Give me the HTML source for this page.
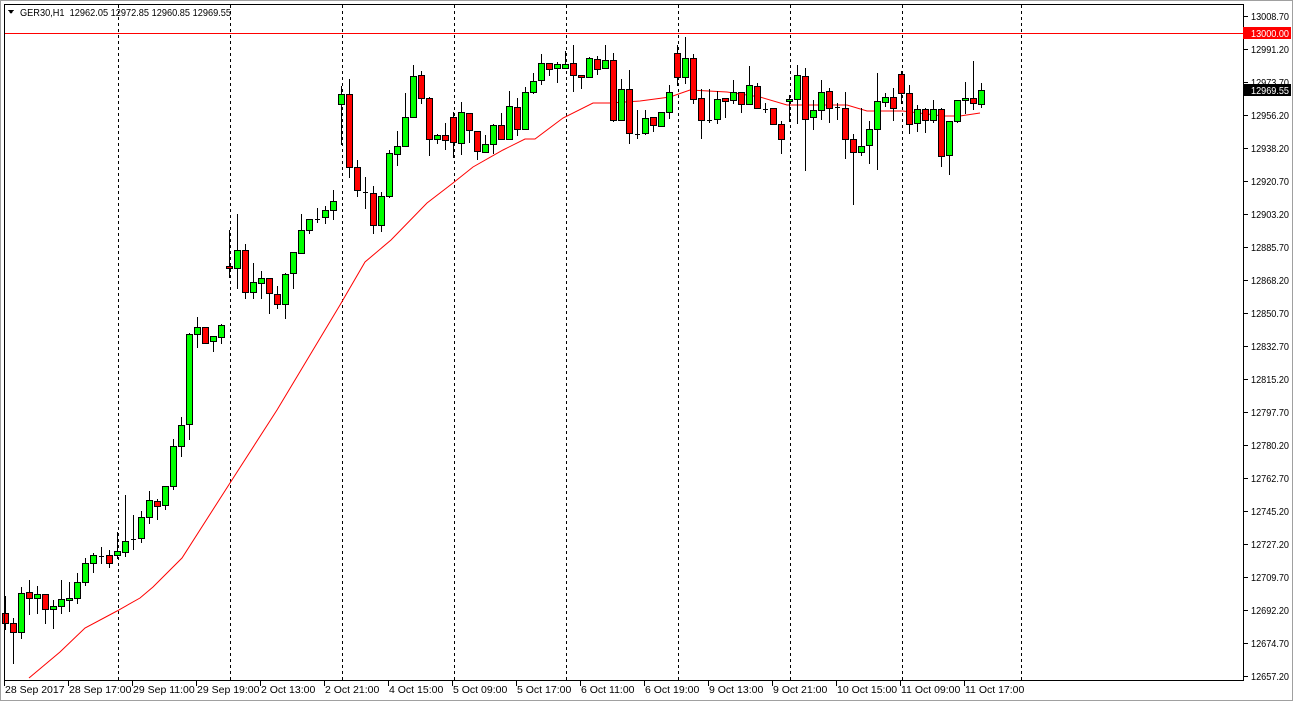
<!DOCTYPE html>
<html><head><meta charset="utf-8"><style>
html,body{margin:0;padding:0;background:#fff;}
body{width:1294px;height:702px;overflow:hidden;position:relative;}
svg text{font-family:"Liberation Sans",Arial,sans-serif;font-size:10.5px;}
</style></head><body>
<svg id="c" width="1294" height="702" xmlns="http://www.w3.org/2000/svg" shape-rendering="crispEdges">
<rect x="0" y="0" width="1294" height="702" fill="#fff"/>
<rect x="0.5" y="0.5" width="1292" height="700" fill="none" stroke="#a0a0a0"/>
<g id="grid" stroke="#000" stroke-dasharray="3,3"></g>
<line x1="4" y1="33.5" x2="1244" y2="33.5" stroke="#f00"/>
<polyline id="ma" fill="none" stroke="#f00" stroke-width="1" shape-rendering="auto"></polyline>
<g id="candles"></g>
<rect x="4.5" y="4.5" width="1239" height="676" fill="none" stroke="#000"/>
<g id="axis"></g>
<text x="20" y="16" fill="#000" textLength="211" lengthAdjust="spacingAndGlyphs" xml:space="preserve">GER30,H1  12962.05 12972.85 12960.85 12969.55</text>
<polygon points="8,10 14,10 11,14" fill="#000"/>
</svg>
<script>
var ns="http://www.w3.org/2000/svg";
function el(t,a,p,txt){var e=document.createElementNS(ns,t);for(var k in a)e.setAttribute(k,a[k]);if(txt!==undefined)e.textContent=txt;p.appendChild(e);return e;}
var grid=document.getElementById('grid');
[118,230,342,454,566,678,790,902,1021].forEach(function(x){el('line',{x1:x+.5,y1:5,x2:x+.5,y2:680},grid);});
var D=[
['r',613,623,596,629],['r',623,632,618,663],['g',593,632,587,638],['r',592,598,580,614],['g',594,598,586,613],
['r',594,609,594,623],['g',606,609,600,628],['g',599,606,580,613],['g',598,600,582,611],['g',582,598,573,603],
['g',563,582,558,585],['g',555,563,553,572],['d',556,556,547,563],['r',555,563,550,567],['g',551,555,532,558],
['g',541,552,495,556],['d',539,539,515,549],['g',517,538,511,542],['g',500,517,491,523],['r',501,506,499,519],
['g',486,505,486,509],['g',446,486,439,489],['g',425,446,417,456],['g',334,424,333,439],['g',327,334,317,347],
['r',327,343,327,343],['g',336,341,336,351],['g',325,337,324,343],['r',266,268,230,277],['g',250,268,214,288],
['r',250,292,244,298],['g',282,292,263,298],['g',278,283,271,298],['r',278,293,278,313],['r',294,304,286,308],
['g',274,304,273,318],['g',252,273,252,288],['g',230,253,214,253],['g',219,230,219,233],['d',219,219,208,222],
['g',210,217,206,223],['g',201,210,190,219],['g',94,104,86,144],['r',94,167,79,177],['r',167,190,160,196],
['d',192,192,177,208],['r',193,225,186,233],['g',196,225,192,231],['g',153,196,150,197],['g',146,154,131,165],
['g',117,146,93,146],['g',76,117,65,117],['r',75,98,71,103],['r',98,139,97,155],['g',135,139,134,143],
['r',135,140,123,149],['r',117,142,112,157],['g',112,143,102,154],['r',113,130,113,142],['r',131,151,131,159],
['g',144,152,135,152],['g',125,144,124,153],['r',125,139,113,139],['g',106,139,91,139],['r',107,129,98,135],
['g',92,129,87,129],['g',81,92,73,93],['g',63,80,54,84],['r',63,69,63,75],['g',64,68,62,82],
['g',64,68,51,68],['r',63,75,45,91],['r',75,77,75,88],['g',58,77,57,77],['r',59,69,56,74],
['g',60,68,45,68],['r',60,120,53,121],['g',89,120,79,120],['r',89,133,70,143],['d',134,134,110,138],
['g',118,133,110,134],['r',117,125,117,131],['g',112,126,112,126],['g',92,112,85,118],['r',53,77,45,85],
['g',58,77,37,83],['r',58,99,54,103],['r',98,120,89,138],['d',120,120,89,122],['g',99,119,91,123],
['r',98,101,98,117],['g',92,100,80,103],['r',92,104,92,112],['g',85,104,66,104],['r',86,108,83,108],
['d',109,109,103,112],['r',108,124,108,124],['r',124,139,121,153],['g',99,101,95,121],['g',75,99,65,123],
['r',76,119,68,170],['g',110,117,100,129],['g',92,110,80,119],['r',91,108,88,122],['d',107,107,103,119],
['r',108,139,92,158],['r',139,152,134,204],['g',146,152,108,155],['g',129,145,121,163],['g',101,129,73,169],
['g',97,102,93,106],['r',97,108,88,120],['r',74,93,71,103],['r',93,124,85,133],['g',109,123,105,131],
['r',109,120,108,132],['g',109,120,100,122],['r',109,156,108,166],['g',121,155,121,174],['g',100,121,100,122],
['g',98,100,82,113],['r',98,103,61,109],['g',90,104,83,107]
];
var cg=document.getElementById('candles');
D.forEach(function(c,i){
 var x=5+8*i;
 el('line',{x1:x+.5,y1:c[3],x2:x+.5,y2:c[4]+1,stroke:'#000'},cg);
 if(c[0]=='d'){el('line',{x1:x-2,y1:c[1]+.5,x2:x+3,y2:c[1]+.5,stroke:'#000'},cg);}
 else{var h=Math.max(c[2]-c[1],2);el('rect',{x:x-2.5,y:c[1]+.5,width:6,height:h,fill:c[0]=='g'?'#00ff00':'#ff0000',stroke:'#000'},cg);}
});
var ma=[[29,678],[60,652],[85,628],[117,611],[140,598],[153,587],[182,558],[230,483],[277,410],[340,305],[365,262],[391,240],[427,203],[453,183],[473,167],[503,150],[525,139],[535,139],[563,118],[593,103],[610,103],[640,101],[670,97],[690,90],[727,92],[760,97],[787,105],[820,105],[847,105],[867,111],[903,111],[943,116],[960,116],[980,113]];
document.getElementById('ma').setAttribute('points',ma.map(function(p){return p.join(',')}).join(' '));
var ax=document.getElementById('axis');
var P=['13008.70','12991.20','12973.70','12956.20','12938.20','12920.70','12903.20','12885.70','12868.20','12850.70','12832.70','12815.20','12797.70','12780.20','12762.70','12745.20','12727.20','12709.70','12692.20','12674.70','12657.20'];
P.forEach(function(p,i){var y=16+33*i;el('line',{x1:1244,y1:y+.5,x2:1248,y2:y+.5,stroke:'#000'},ax);el('text',{x:1251,y:y+4,fill:'#000',textLength:38,lengthAdjust:'spacingAndGlyphs'},ax,p);});
el('rect',{x:1243,y:27,width:48,height:12,fill:'#f00'},ax);el('text',{x:1251,y:37,fill:'#fff',textLength:38,lengthAdjust:'spacingAndGlyphs'},ax,'13000.00');
el('rect',{x:1243,y:84,width:48,height:12,fill:'#000'},ax);el('text',{x:1251,y:94,fill:'#fff',textLength:38,lengthAdjust:'spacingAndGlyphs'},ax,'12969.55');
var T=['28 Sep 2017','28 Sep 17:00','29 Sep 11:00','29 Sep 19:00','2 Oct 13:00','2 Oct 21:00','4 Oct 15:00','5 Oct 09:00','5 Oct 17:00','6 Oct 11:00','6 Oct 19:00','9 Oct 13:00','9 Oct 21:00','10 Oct 15:00','11 Oct 09:00','11 Oct 17:00'];
T.forEach(function(t,i){var x=4+64*i;el('line',{x1:x+.5,y1:681,x2:x+.5,y2:686,stroke:'#000'},ax);el('text',{x:x+1,y:693,fill:'#000'},ax,t);});
</script>
</body></html>
